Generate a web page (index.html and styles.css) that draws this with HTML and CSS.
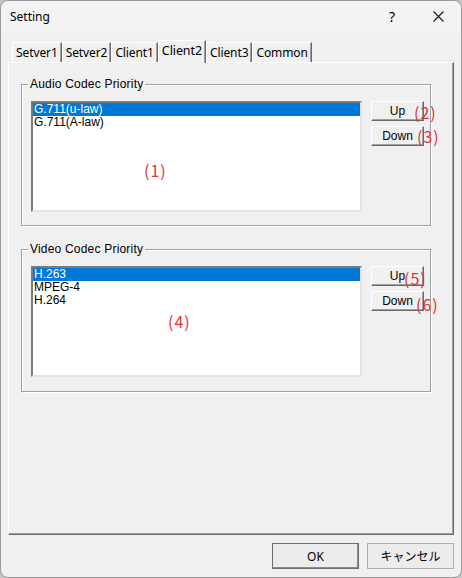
FILE: index.html
```html
<!DOCTYPE html>
<html lang="ja">

<head>
    <meta charset="UTF-8">
    <title>Setting</title>
    <link rel="stylesheet" href="styles.css">
</head>

<body>

    <div class="window">
        <div class="titlebar">
            <span class="title">Setting</span>
            <span class="cap help">?</span>
            <span class="cap close">
                <svg width="11" height="11" viewBox="0 0 11 11">
                    <path d="M0.5 0.5 L10.5 10.5 M10.5 0.5 L0.5 10.5" stroke="#1a1a1a" stroke-width="1.1" fill="none" />
                </svg>
            </span>
        </div>

        <div class="tabs">
            <div class="tab">Setver1</div>
            <div class="tab">Setver2</div>
            <div class="tab">Client1</div>
            <div class="tab active">Client2</div>
            <div class="tab">Client3</div>
            <div class="tab">Common</div>
        </div>

        <div class="panel">
            <div class="group">
                <div class="group-title">Audio Codec Priority</div>
                <div class="group-body">
                    <div class="listbox">
                        <div class="item selected">G.711(u-law)</div>
                        <div class="item">G.711(A-law)</div>
                    </div>
                    <div class="side">
                        <button class="btn">Up</button>
                        <button class="btn">Down</button>
                    </div>
                </div>
            </div>

            <div class="group video">
                <div class="group-title">Video Codec Priority</div>
                <div class="group-body">
                    <div class="listbox">
                        <div class="item selected">H.263</div>
                        <div class="item">MPEG-4</div>
                        <div class="item">H.264</div>
                    </div>
                    <div class="side">
                        <button class="btn">Up</button>
                        <button class="btn">Down</button>
                    </div>
                </div>
            </div>
        </div>

        <div class="footer">
            <button class="dlg-btn default">OK</button>
            <button class="dlg-btn">キャンセル</button>
        </div>

        <!-- red callout numbers -->
        <span class="mark m1">(1)</span>
        <span class="mark m2">(2)</span>
        <span class="mark m3">(3)</span>
        <span class="mark m4">(4)</span>
        <span class="mark m5">(5)</span>
        <span class="mark m6">(6)</span>
    </div>

</body>

</html>
```

FILE: styles.css
```css
* {
    margin: 0;
    padding: 0;
    box-sizing: border-box;
}

body {
    background-color: #c4c4c4;
    width: 462px;
    height: 578px;
    overflow: hidden;
}

.window {
    position: relative;
    width: 462px;
    height: 578px;
    border: 1px solid #9a9a9a;
    border-radius: 8px;
    background-color: #f0f0f0;
    display: flex;
    flex-direction: column;
    font-family: "Noto Sans", sans-serif;
    font-size: 12px;
    color: #000;
}

.titlebar {
    height: 30px;
    display: flex;
    align-items: center;
    padding-left: 9px;
    border-radius: 8px 8px 0 0;
    background-color: #f3f3f3;

    & .title {
        flex: 1;
    }
}

.cap {
    width: 46px;
    height: 30px;
    display: flex;
    justify-content: center;
    align-items: center;
}

.help {
    font-size: 14px;
    padding-top: 1px;
}

.close {
    padding-top: 1px;
}

.tabs {
    margin-top: 9px;
    height: 22px;
    padding-left: 11px;
    display: flex;
    align-items: flex-end;
    position: relative;
    z-index: 1;
}

.tab {
    height: 20px;
    padding: 0 3px;
    display: flex;
    align-items: center;
    border-top: 1px solid #fff;
    border-left: 1px solid #fff;
    border-right: 1px solid #696969;
    box-shadow: inset -1px 0 0 #a0a0a0;
    line-height: 1;
    letter-spacing: -0.1px;
}

.tab.active {
    height: 23px;
    margin-bottom: -1px;
    padding-bottom: 2px;
    background-color: #f0f0f0;
    font-size: 12.5px;
}

.panel {
    height: 473px;
    margin: 0 7px;
    padding: 21px 0 0 12px;
    border-top: 1px solid #fff;
    border-left: 1px solid #fff;
    border-right: 1px solid #696969;
    border-bottom: 1px solid #696969;
    box-shadow: inset -1px -1px 0 #a0a0a0;
    display: flex;
    flex-direction: column;
    gap: 23px;
}

.group {
    width: 410px;
    height: 142px;
    border: 1px solid #a0a0a0;
    box-shadow: 1px 1px 0 #fff, inset 1px 1px 0 #fff;
    padding: 0 6px 0 9px;
    display: flex;
    flex-direction: column;
}

.group.video {
    height: 143px;
}

.group-title {
    align-self: flex-start;
    margin: -8px 0 0 -3px;
    padding: 0 2px;
    height: 14px;
    line-height: 14px;
    background-color: #f0f0f0;
    font-family: "Liberation Sans", sans-serif;
    letter-spacing: 0.2px;
}

.group-body {
    margin-top: 10px;
    display: flex;
    gap: 9px;
}

.listbox {
    width: 331px;
    height: 111px;
    background-color: #fff;
    border: 2px solid;
    border-color: #7c7c7c #e3e3e3 #e3e3e3 #7c7c7c;
    font-family: "Liberation Sans", sans-serif;
    font-size: 12px;
}

.item {
    height: 13px;
    line-height: 13px;
    padding-left: 1px;
}

.item.selected {
    background-color: #0078d7;
    color: #fff;
}

.side {
    display: flex;
    flex-direction: column;
    gap: 5px;
}

.btn {
    width: 53px;
    height: 20px;
    background-color: #f0f0f0;
    border: 1px solid;
    border-color: #fff #696969 #696969 #fff;
    box-shadow: inset -1px -1px 0 #a0a0a0;
    font-family: "Liberation Sans", sans-serif;
    font-size: 12px;
    color: #000;
}

.footer {
    flex: 1;
    display: flex;
    justify-content: flex-end;
    align-items: flex-start;
    gap: 8px;
    padding: 8px 7px 0 0;
}

.dlg-btn {
    width: 87px;
    height: 26px;
    background-color: #ececec;
    border: 1px solid #adadad;
    font-family: "Noto Sans", "Noto Sans CJK JP", sans-serif;
    font-size: 12px;
    color: #000;
}

.dlg-btn.default {
    border: 1px solid #6e6e6e;
    box-shadow: inset -1px -1px 0 #8a8a8a;
}

.mark {
    position: absolute;
    font-family: "Noto Sans CJK JP", sans-serif;
    font-size: 16px;
    line-height: 18px;
    color: #e03434;
    letter-spacing: 1px;
}

.m1 { left: 143px; top: 160px; }
.m2 { left: 413px; top: 102px; }
.m3 { left: 416px; top: 126px; }
.m4 { left: 167px; top: 311px; }
.m5 { left: 403px; top: 268px; }
.m6 { left: 415px; top: 294px; }
```
